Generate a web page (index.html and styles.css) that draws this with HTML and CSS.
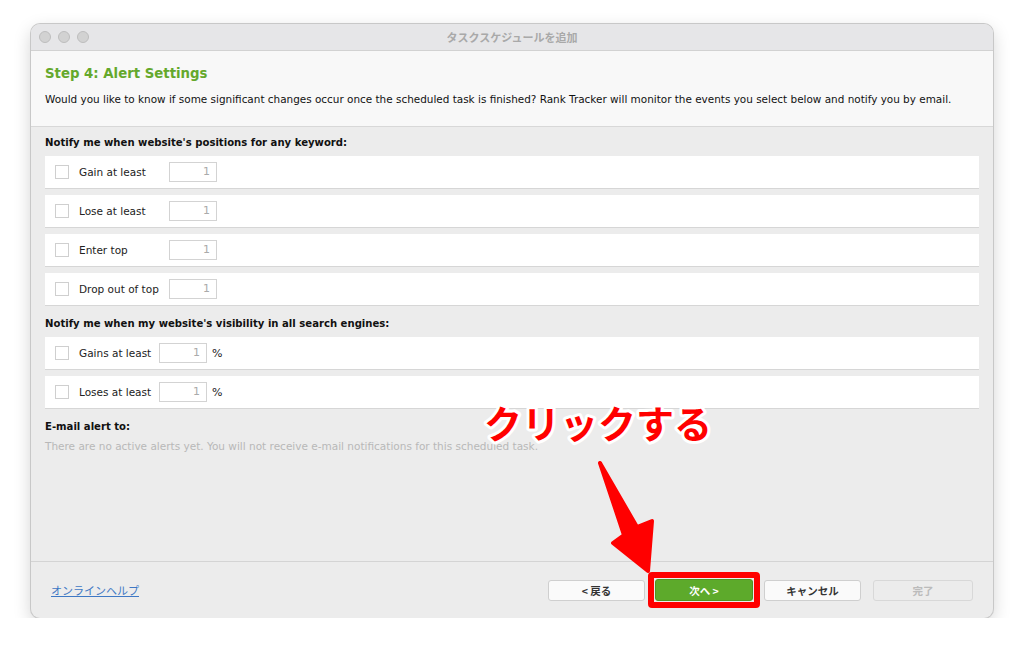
FILE: index.html
```html
<!DOCTYPE html>
<html lang="ja">
<head>
    <meta charset="UTF-8">
    <title>タスクスケジュールを追加</title>
    <link rel="stylesheet" href="styles.css">
</head>
<body>
    <div class="window">
        <div class="titlebar">
            <div class="lights"><span></span><span></span><span></span></div>
            <div class="title">タスクスケジュールを追加</div>
        </div>
        <div class="header">
            <h1>Step 4: Alert Settings</h1>
            <p>Would you like to know if some significant changes occur once the scheduled task is finished? Rank Tracker will monitor the events you select below and notify you by email.</p>
        </div>
        <div class="content">
            <h2>Notify me when website's positions for any keyword:</h2>
            <div class="row"><span class="check"></span><span class="label w90">Gain at least</span><span class="num">1</span></div>
            <div class="row"><span class="check"></span><span class="label w90">Lose at least</span><span class="num">1</span></div>
            <div class="row"><span class="check"></span><span class="label w90">Enter top</span><span class="num">1</span></div>
            <div class="row"><span class="check"></span><span class="label w90">Drop out of top</span><span class="num">1</span></div>

            <h2 class="gap">Notify me when my website's visibility in all search engines:</h2>
            <div class="row"><span class="check"></span><span class="label w80">Gains at least</span><span class="num">1</span><span class="pct">%</span></div>
            <div class="row"><span class="check"></span><span class="label w80">Loses at least</span><span class="num">1</span><span class="pct">%</span></div>

            <h2 class="gap">E-mail alert to:</h2>
            <p class="muted">There are no active alerts yet. You will not receive e-mail notifications for this scheduled task.</p>
        </div>
        <div class="footer">
            <a class="help" href="#">オンラインヘルプ</a>
            <div class="buttons">
                <button class="btn">&lt; 戻る</button>
                <div class="highlight"><button class="btn next">次へ &gt;</button></div>
                <button class="btn">キャンセル</button>
                <button class="btn disabled">完了</button>
            </div>
        </div>
    </div>

    <svg class="annotation" width="1024" height="657" viewBox="0 0 1024 657">
        <text x="484" y="438" class="callout">クリックする</text>
        <polygon points="600,463 637,527 652,521 648,571 613,543 624,535" fill="#f00" stroke="#f00" stroke-width="4" stroke-linejoin="round"/>
    </svg>
</body>
</html>
```

FILE: styles.css
```css
body { margin: 0; background: #fff; font-family: "DejaVu Sans", "Noto Sans CJK JP", sans-serif; font-size: 11px; color: #222; }

.window {
    margin: 24px 0 0 31px; width: 962px; height: 594px;
    border-radius: 9px; overflow: hidden; background: #ececec;
    box-shadow: 0 0 0 1px #c8c8c8, 0 6px 18px rgba(0,0,0,0.18);
    display: flex; flex-direction: column;
}

.titlebar {
    height: 26px; background: #e6e6e8; border-bottom: 1px solid #d2d2d2;
    display: flex; align-items: center; position: relative; flex-shrink: 0;
}
.lights { display: flex; gap: 7px; padding-left: 8px; }
.lights span { width: 10px; height: 10px; border-radius: 50%; background: #d2d2d2; border: 1px solid #bdbdbd; }
.title { position: absolute; left: 0; right: 0; text-align: center; color: #a9a9a9; font-family: "Noto Sans CJK JP", sans-serif; font-size: 11px; font-weight: bold; }

.header { background: #f8f8f8; height: 75px; border-bottom: 1px solid #d8d8d8; padding: 0 14px; flex-shrink: 0; }
.header h1 { margin: 13px 0 0; font-size: 13.3px; color: #64a82c; font-weight: bold; height: 20px; line-height: 20px; }
.header p { margin: 9px 0 0; font-size: 10.45px; color: #111; }

.content { flex: 1; padding: 8px 14px 0; }
.content h2 { margin: 0 0 5px; font-size: 10.1px; font-weight: bold; height: 16px; line-height: 16px; color: #111; }
.content h2.gap { margin-top: 10px; }

.row {
    height: 32px; background: #fff; border-bottom: 1px solid #d6d6d6;
    display: flex; align-items: center; margin-bottom: 6px; padding-left: 10px;
}
.check { width: 14px; height: 14px; border: 1px solid #cfcfcf; background: #fff; box-sizing: border-box; margin-right: 10px; }
.label { color: #222; font-size: 10.5px; }
.w90 { width: 90px; }
.w80 { width: 80px; }
.num {
    width: 48px; height: 20px; border: 1px solid #d3d3d3; box-sizing: border-box;
    text-align: right; color: #aaa; line-height: 18px; padding-right: 6px;
}
.pct { margin-left: 5px; color: #222; }

.muted { margin: 5px 0 0; color: #b8b8b8; font-size: 10.5px; }

.footer {
    height: 56px; border-top: 1px solid #d4d4d4; flex-shrink: 0;
    display: flex; align-items: center; justify-content: space-between; padding: 0 20px;
}
.help { color: #3f78c4; font-family: "Noto Sans CJK JP", sans-serif; font-size: 11px; text-decoration: underline; margin-top: -1px; }
.buttons { display: flex; align-items: center; }
.btn {
    width: 97px; height: 21px; border: 1px solid #cfcfcf; border-radius: 3px; background: #fafafa;
    font-family: "Noto Sans CJK JP", sans-serif; font-size: 10.5px; font-weight: bold; color: #333;
    padding: 0; margin: 0;
}
.highlight { border: 6px solid #f00; border-radius: 4px; padding: 1px; margin: 0 4px 0 3px; }
.highlight .btn { background: #5daa2b; color: #fff; border-color: #4f9423; width: 98px; height: 22px; }
.btn.disabled { color: #bbb; background: #ececec; border-color: #d8d8d8; width: 100px; margin-left: 12px; }

.annotation { position: absolute; left: 0; top: 0; pointer-events: none; }
.callout {
    font-family: "Noto Sans CJK JP", sans-serif; font-size: 38px; font-weight: bold;
    fill: #f00; stroke: #fff; stroke-width: 6px; paint-order: stroke; stroke-linejoin: round;
}
```
